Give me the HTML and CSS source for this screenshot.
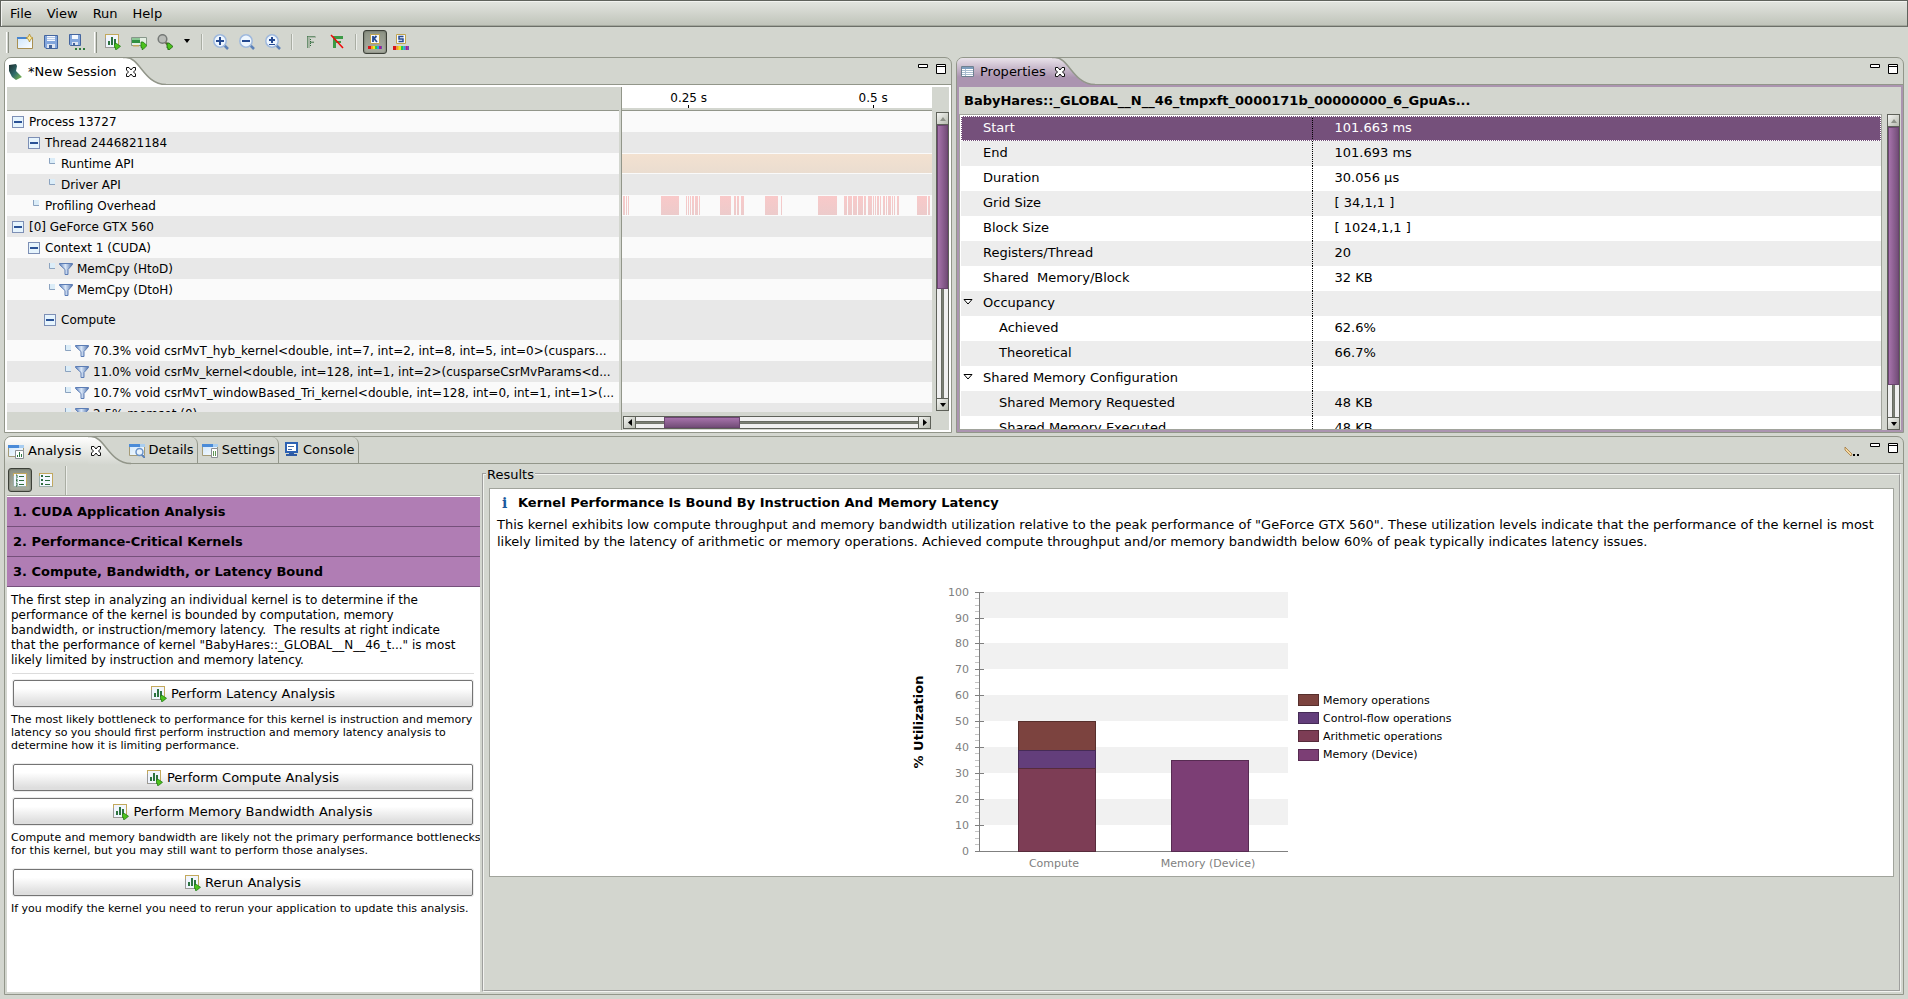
FILE: index.html
```html
<!DOCTYPE html>
<html lang="en">
<head>
<meta charset="utf-8">
<title>NVIDIA Visual Profiler</title>
<link rel="stylesheet" href="styles.css">
</head>
<body>
<svg class="defs" aria-hidden="true">
  <defs>
    <linearGradient id="gFunnel" x1="0" x2="1"><stop offset="0" stop-color="#5f82bd"/><stop offset=".45" stop-color="#dbe8f8"/><stop offset="1" stop-color="#4e70ab"/></linearGradient>
    <linearGradient id="gPurple" x1="0" x2="0" y1="0" y2="1"><stop offset="0" stop-color="#e9e3ea"/><stop offset=".7" stop-color="#ab94b0"/><stop offset="1" stop-color="#ab94b0"/></linearGradient>
    <linearGradient id="gFade" x1="0" x2="0" y1="0" y2="1"><stop offset="0" stop-color="#fff"/><stop offset="1" stop-color="#d3d6cf"/></linearGradient>
    <linearGradient id="gWin" x1="0" x2="1" y1="0" y2="1"><stop offset="0" stop-color="#cfe6fb"/><stop offset="1" stop-color="#fdfefe"/></linearGradient>
    <linearGradient id="gNv" x1="0" x2="1" y1="0" y2="1"><stop offset="0" stop-color="#1b2b2c"/><stop offset=".5" stop-color="#2f6a6a"/><stop offset="1" stop-color="#86c24a"/></linearGradient>
    <linearGradient id="gPink" x1="0" x2="0" y1="0" y2="1"><stop offset="0" stop-color="#f9c9c9"/><stop offset="1" stop-color="#eccbcb"/></linearGradient>
  </defs>
  <symbol id="minus" viewBox="0 0 12 12"><rect x=".5" y=".5" width="11" height="11" fill="#e6f4fd" stroke="#7d8fb5"/><path d="M2 5h8v2H2z" fill="#2a5296"/></symbol>
  <symbol id="leaf" viewBox="0 0 12 12"><path d="M6 0h5v5H6z" fill="#dcedf8"/><path d="M5.500 0v5.500H11" fill="none" stroke="#8ba3c0"/></symbol>
  <symbol id="funnel" viewBox="0 0 16 16"><path d="M1.500 2.500h13v1L10 8.500v5H7v-5l-5.500-5z" fill="url(#gFunnel)" stroke="#5c7db5"/></symbol>
  <symbol id="close" viewBox="0 0 12 12"><path d="M1.500 1.500H4l2 2.500 2-2.500h2.500V4L8.500 6l2 2v2.500H8L6 8l-2 2.500H1.500V8l2-2-2-2z" fill="#fff" stroke="#111"/></symbol>
  <symbol id="run" viewBox="0 0 16 16"><rect x=".5" y=".5" width="13" height="13" fill="#f1f5fd" stroke="#c3a95c"/><path d="M.5 4v9.500h9" fill="none" stroke="#999"/><path d="M3 7h2v4H3zM6 3h2v8H6zM9 5h2v6H9z" fill="#2c7340"/><path d="M9.500 9.500h2l4 2.800-4 3.200h-1v-2h-1z" fill="#4cc21c" stroke="#1f7a16" stroke-width=".8"/></symbol>
  <symbol id="lens" viewBox="0 0 16 16"><path d="M11 11l4 4" stroke="#5b81b8" stroke-width="2.500"/><circle cx="7" cy="7" r="6.200" fill="#eef6fe" stroke="#9fb9dd" stroke-width="1.500"/></symbol>
  <symbol id="view" viewBox="0 0 16 16"><path d="M.5 2.500h15v11H.5z" fill="url(#gWin)" stroke="#a59b77"/><path d="M0 2h16v3H0z" fill="#4a8bd8"/><path d="M11 2h5v3h-5z" fill="#a8cdf0"/></symbol>
  <symbol id="bars5" viewBox="0 0 14 4" preserveAspectRatio="none"><path d="M0 0h3v4H0z" fill="#d8141c"/><path d="M3 0h2v4H3z" fill="#f7a21c"/><path d="M5 0h2v4H5z" fill="#ece91b"/><path d="M7 0h2v4H7z" fill="#27c84d"/><path d="M9 0h2v4H9z" fill="#2aa3e0"/><path d="M11 0h2v4h-2z" fill="#a61b90"/><path d="M13 0h1v4h-1z" fill="#6c4fb0"/></symbol>
  <symbol id="min" viewBox="0 0 10 10"><path d="M.5.5h9v3h-9z" fill="#fff" stroke="#000"/></symbol>
  <symbol id="max" viewBox="0 0 10 10"><path d="M.5.5h9v9h-9zM1 2.500h8" fill="#fff" stroke="#000"/></symbol>
  <symbol id="list" viewBox="0 0 16 16"><rect x="1.500" y="1.500" width="13" height="13" fill="#f2f7ff" stroke="#c2a85e"/><path d="M1.500 4v10.500h13" fill="none" stroke="#9db0ad"/><path d="M7 4.500h5M7 8.500h5M7 12.500h5" stroke="#2c6b3d"/></symbol>
</svg>

<div class="app">
  <nav class="menubar">
    <button>File</button><button>View</button><button>Run</button><button>Help</button>
  </nav>

  <div class="toolbar">
    <span class="handle"></span>
    <button aria-label="New session"><svg width="16" height="16" viewBox="0 0 16 16"><path d="M.5 4.500h15v10H.5z" fill="url(#gWin)" stroke="#a98f51"/><path d="M0 3h10v2H0z" fill="#4784cf"/><path d="M12.500 0l1.200 2.800L16 4l-2.300 1.200L12.500 8l-1.200-2.800L9 4l2.300-1.200z" fill="#fbe99c" stroke="#b08a28" stroke-width=".8"/></svg></button>
    <button aria-label="Save"><svg width="16" height="16" viewBox="0 0 16 16"><path d="M1.500 1.500h13v13H3l-1.500-1.500z" fill="#83a6dc" stroke="#44659f"/><path d="M4 2h8v5H4z" fill="#f4f8fe"/><path d="M4 3.500h8M4 5.500h8" stroke="#b5c9e8"/><path d="M4 10h8v4H4z" fill="#dfe6f2"/><path d="M6 11h3v4H6z" fill="#42639b"/></svg></button>
    <button aria-label="Save all"><svg width="18" height="16" viewBox="0 0 18 16"><path d="M1.500.5h11v11h-10l-1-1z" fill="#83a6dc" stroke="#44659f"/><path d="M4 1h6v4H4z" fill="#f4f8fe"/><path d="M4 8h6v3H4z" fill="#dfe6f2"/><path d="M5 9h2v3H5z" fill="#42639b"/><path d="M7 14h2v2H7zM11 14h2v2h-2zM15 14h2v2h-2z" fill="#2f7a3b"/></svg></button>
    <span class="handle"></span>
    <button aria-label="Run analysis"><svg width="16" height="16"><use href="#run"/></svg></button>
    <button aria-label="Run application"><svg width="16" height="16" viewBox="0 0 16 16"><path d="M.5 3.500h15v8H.5z" fill="#e4efe3" stroke="#87978a"/><path d="M1 4h8v5H1z" fill="#2f9141"/><path d="M1 4h8v2H1z" fill="#8cc796"/><path d="M2 11h6v1.500H2z" fill="#c2a85e"/><path d="M10 8h2l4 3.500-4 4h-1v-2h-1z" fill="#4cc21c" stroke="#1f7a16" stroke-width=".8"/></svg></button>
    <button aria-label="Examine"><svg width="16" height="16" viewBox="0 0 16 16"><path d="M8 8l4 4" stroke="#74654a" stroke-width="2"/><circle cx="5.500" cy="5" r="4.300" fill="#b9bcb8" stroke="#767a77" stroke-width="1.500"/><path d="M10 9h2l4 3.500-4 3.500h-1v-2h-1z" fill="#4cc21c" stroke="#1a5e12" stroke-width=".8"/></svg></button>
    <button class="caret" aria-label="Examine options"><svg width="6" height="4" viewBox="0 0 6 4"><path d="M0 0h6L3 4z"/></svg></button>
    <span class="sep"></span>
    <button aria-label="Zoom in"><svg width="16" height="16" viewBox="0 0 16 16"><use href="#lens"/><path d="M3 6h8v2H3zM6 3h2v8H6z" fill="#254a91"/></svg></button>
    <button aria-label="Zoom out"><svg width="16" height="16" viewBox="0 0 16 16"><use href="#lens"/><path d="M3 6h8v2H3z" fill="#254a91"/></svg></button>
    <button aria-label="Zoom to fit"><svg width="16" height="16" viewBox="0 0 16 16"><use href="#lens"/><path d="M4 5h6v2H4zM6 3h2v6H6zM4 10h6v1H4z" fill="#254a91"/></svg></button>
    <span class="sep"></span>
    <button aria-label="Apply filter"><svg width="16" height="16" viewBox="0 0 16 16"><path d="M4 2h9v2H7v3h4v2H7v5H4z" fill="#a9b8a6"/><path d="M4.500 2.500h8M4.500 2.500v11.500M7.500 5v8M7.500 8.500h4" fill="none" stroke="#2f6b3c" stroke-dasharray="1 1"/></svg></button>
    <button aria-label="Clear filter"><svg width="16" height="16" viewBox="0 0 16 16"><path d="M4 2h10v3H7v2h5v2H7v5H4z" fill="#3c9a46"/><path d="M2 1l12 13" stroke="#f00808" stroke-width="1.500"/></svg></button>
    <span class="sep"></span>
    <button class="pressed" aria-label="Color by kernel"><svg width="16" height="16" viewBox="0 0 16 16"><path d="M3.500.5h9v9h-9z" fill="#f5f9ff" stroke="#c0a44f"/><path d="M6 2v6M6.500 5l3-3M7 4.500L10 8" stroke="#254a91" stroke-width="1.800" fill="none"/><use href="#bars5" x="1" y="12" width="14" height="3"/></svg></button>
    <button aria-label="Color by stream"><svg width="16" height="16" viewBox="0 0 16 16"><path d="M3.500.5h9v9h-9z" fill="#f5f9ff" stroke="#c0a44f"/><path d="M10.500 2.500H6V5h4v2.500H5.500" stroke="#254a91" stroke-width="1.500" fill="none"/><use href="#bars5" x="0" y="12" width="16" height="4"/></svg></button>
  </div>

  <main class="workbench">
    <section class="pane session">
      <div class="tabs">
        <div class="tab active white">
          <svg width="16" height="16" viewBox="0 0 16 16"><path d="M1 1l7-1 1 2-1 5 6 6-6 3-4-3L1 7z" fill="url(#gNv)"/></svg>
          <span>*New Session</span>
          <button class="x" aria-label="Close"><svg width="12" height="12"><use href="#close"/></svg></button>
        </div>
        <svg class="swoosh" width="46" height="28" viewBox="0 0 46 28"><path d="M0 0h3c14 0 18 26 38 26.500V28H0z" fill="#fff"/><path d="M0-.5h3c14 0 18 27 40 27" fill="none" stroke="#92968a" stroke-width="1.500"/></svg>
        <div class="winbtns"><button aria-label="Minimize"><svg width="10" height="10"><use href="#min"/></svg></button><button aria-label="Maximize"><svg width="10" height="10"><use href="#max"/></svg></button></div>
      </div>
      <div class="timeline">
        <div class="names">
          <div class="corner"></div>
          <ul class="tree">
            <li class="l0"><svg class="tw"><use href="#minus"/></svg>Process 13727</li>
            <li class="l1"><svg class="tw"><use href="#minus"/></svg>Thread 2446821184</li>
            <li class="l2"><svg class="tw"><use href="#leaf"/></svg>Runtime API</li>
            <li class="l2"><svg class="tw"><use href="#leaf"/></svg>Driver API</li>
            <li class="l1"><svg class="tw"><use href="#leaf"/></svg>Profiling Overhead</li>
            <li class="l0"><svg class="tw"><use href="#minus"/></svg>[0] GeForce GTX 560</li>
            <li class="l1"><svg class="tw"><use href="#minus"/></svg>Context 1 (CUDA)</li>
            <li class="l2"><svg class="tw"><use href="#leaf"/></svg><svg class="fn"><use href="#funnel"/></svg>MemCpy (HtoD)</li>
            <li class="l2"><svg class="tw"><use href="#leaf"/></svg><svg class="fn"><use href="#funnel"/></svg>MemCpy (DtoH)</li>
            <li class="l2 tall"><svg class="tw"><use href="#minus"/></svg>Compute</li>
            <li class="l3"><svg class="tw"><use href="#leaf"/></svg><svg class="fn"><use href="#funnel"/></svg>70.3% void csrMvT_hyb_kernel&lt;double, int=7, int=2, int=8, int=5, int=0&gt;(cuspars...</li>
            <li class="l3"><svg class="tw"><use href="#leaf"/></svg><svg class="fn"><use href="#funnel"/></svg>11.0% void csrMv_kernel&lt;double, int=128, int=1, int=2&gt;(cusparseCsrMvParams&lt;d...</li>
            <li class="l3"><svg class="tw"><use href="#leaf"/></svg><svg class="fn"><use href="#funnel"/></svg>10.7% void csrMvT_windowBased_Tri_kernel&lt;double, int=128, int=0, int=1, int=1&gt;(...</li>
            <li class="l3"><svg class="tw"><use href="#leaf"/></svg><svg class="fn"><use href="#funnel"/></svg>2.5% memset (0)</li>
          </ul>
          <div class="foot"></div>
        </div>
        <div class="tracks">
          <div class="ruler">
            <span class="mark first">0.25 s</span><span class="mark second">0.5 s</span>
          </div>
          <div class="rows">
            <div></div><div></div>
            <div><span class="api"></span></div>
            <div></div>
            <div><svg class="overhead" viewBox="0 0 310 19" preserveAspectRatio="none"><path fill="url(#gPink)" d="M1 0h2v19H1zM4 0h1v19H4zM6 0h1v19H6zM39 0h18v19H39zM64 0h1v19h-1zM66 0h1v19h-1zM68 0h1v19h-1zM70 0h2v19h-2zM73 0h3v19h-3zM77 0h1v19h-1zM98 0h11v19H98zM112 0h2v19h-2zM115 0h2v19h-2zM119 0h3v19h-3zM143 0h13v19h-13zM159 0h1v19h-1zM196 0h19v19h-19zM222 0h3v19h-3zM226 0h4v19h-4zM231 0h4v19h-4zM236 0h5v19h-5zM242 0h2v19h-2zM246 0h4v19h-4zM251 0h1v19h-1zM253 0h1v19h-1zM255 0h2v19h-2zM258 0h1v19h-1zM261 0h2v19h-2zM264 0h1v19h-1zM266 0h3v19h-3zM270 0h1v19h-1zM272 0h1v19h-1zM275 0h2v19h-2zM295 0h10v19h-10zM306 0h2v19h-2z"/></svg></div>
            <div></div><div></div><div></div><div></div>
            <div class="tall"></div>
            <div></div><div></div><div></div><div></div>
          </div>
          <div class="hbar">
            <button class="step" aria-label="Scroll left"><svg width="4" height="7" viewBox="0 0 4 7"><path d="M4 0v7L0 3.500z"/></svg></button>
            <div class="groove"><span class="thumb"></span></div>
            <button class="step" aria-label="Scroll right"><svg width="4" height="7" viewBox="0 0 4 7"><path d="M0 0v7l4-3.500z"/></svg></button>
          </div>
        </div>
        <div class="side">
          <div class="vbar">
            <button class="step off" aria-label="Scroll up"><svg width="6" height="4" viewBox="0 0 6 4"><path d="M0 4h6L3 0z"/></svg></button>
            <div class="groove"><span class="thumb tl"></span></div>
            <button class="step" aria-label="Scroll down"><svg width="6" height="4" viewBox="0 0 6 4"><path d="M0 0h6L3 4z"/></svg></button>
          </div>
        </div>
      </div>
    </section>

    <section class="pane props">
      <div class="tabs">
        <div class="tab active purple">
          <svg width="16" height="16" viewBox="0 0 16 16"><path d="M1.500 2.500h12v10h-12z" fill="#fff" stroke="#6e8090"/><path d="M2 3h11v2H2z" fill="#7d9dbd"/><path d="M2 6.500h11M2 8.500h11M2 10.500h11M5.500 5v7" stroke="#a9bdd0" fill="none"/></svg>
          <span>Properties</span>
          <button class="x" aria-label="Close"><svg width="12" height="12"><use href="#close"/></svg></button>
        </div>
        <svg class="swoosh" width="46" height="28" viewBox="0 0 46 28"><path d="M0 0h3c14 0 18 26 38 26.500V28H0z" fill="url(#gPurple)"/><path d="M0-.5h3c14 0 18 27 40 27" fill="none" stroke="#92968a" stroke-width="1.500"/></svg>
        <div class="winbtns"><button aria-label="Minimize"><svg width="10" height="10"><use href="#min"/></svg></button><button aria-label="Maximize"><svg width="10" height="10"><use href="#max"/></svg></button></div>
      </div>
      <div class="propbody">
        <h2>BabyHares::_GLOBAL__N__46_tmpxft_0000171b_00000000_6_GpuAs...</h2>
        <div class="propscroll">
          <div class="proptable">
            <table>
              <tbody>
                <tr class="sel"><td>Start</td><td>101.663 ms</td></tr>
                <tr><td>End</td><td>101.693 ms</td></tr>
                <tr><td>Duration</td><td>30.056 µs</td></tr>
                <tr><td>Grid Size</td><td>[ 34,1,1 ]</td></tr>
                <tr><td>Block Size</td><td>[ 1024,1,1 ]</td></tr>
                <tr><td>Registers/Thread</td><td>20</td></tr>
                <tr><td>Shared&nbsp; Memory/Block</td><td>32 KB</td></tr>
                <tr class="group"><td><svg width="10" height="6" viewBox="0 0 10 6"><path d="M1 .5h8L5 5z" fill="#fff" stroke="#000"/></svg>Occupancy</td><td></td></tr>
                <tr class="sub"><td>Achieved</td><td>62.6%</td></tr>
                <tr class="sub"><td>Theoretical</td><td>66.7%</td></tr>
                <tr class="group"><td><svg width="10" height="6" viewBox="0 0 10 6"><path d="M1 .5h8L5 5z" fill="#fff" stroke="#000"/></svg>Shared Memory Configuration</td><td></td></tr>
                <tr class="sub"><td>Shared Memory Requested</td><td>48 KB</td></tr>
                <tr class="sub"><td>Shared Memory Executed</td><td>48 KB</td></tr>
              </tbody>
            </table>
          </div>
          <div class="vbar">
            <button class="step off" aria-label="Scroll up"><svg width="6" height="4" viewBox="0 0 6 4"><path d="M0 4h6L3 0z"/></svg></button>
            <div class="groove"><span class="thumb pr"></span></div>
            <button class="step" aria-label="Scroll down"><svg width="6" height="4" viewBox="0 0 6 4"><path d="M0 0h6L3 4z"/></svg></button>
          </div>
        </div>
      </div>
    </section>

    <section class="pane analysis">
      <div class="tabs">
        <div class="tab active fade">
          <svg width="16" height="16" viewBox="0 0 16 16"><use href="#view"/><path d="M7.500 7.500h8v8h-8z" fill="#fff" stroke="#8a8f94"/><path d="M9 12h1v2H9zM11 9h1v5h-1zM13 11h1v3h-1z" fill="#2c7340"/></svg>
          <span>Analysis</span>
          <button class="x" aria-label="Close"><svg width="12" height="12"><use href="#close"/></svg></button>
        </div>
        <svg class="swoosh" width="46" height="28" viewBox="0 0 46 28"><path d="M0 0h3c14 0 18 26 38 26.500V28H0z" fill="url(#gFade)"/><path d="M0-.5h3c14 0 18 27 40 27" fill="none" stroke="#92968a" stroke-width="1.500"/></svg>
        <button class="tab details"><svg width="16" height="16" viewBox="0 0 16 16"><use href="#view"/><circle cx="10.500" cy="10" r="3.500" fill="#e9f3fd" stroke="#6a93c9" stroke-width="1.500"/><path d="M13 13l3 3" stroke="#5b81b8" stroke-width="2"/></svg><span>Details</span></button>
        <button class="tab"><svg width="16" height="16" viewBox="0 0 16 16"><use href="#view"/><path d="M9.500 6.500h6v9h-6z" fill="#fff" stroke="#8a8f94"/><path d="M11.500 9v5M13.500 9v5" stroke="#5f9458"/></svg><span>Settings</span></button>
        <button class="tab"><svg width="16" height="16" viewBox="0 0 16 16"><path d="M3 1h11v9H3z" fill="#fff" stroke="#2d62b3" stroke-width="2"/><path d="M5 4.500h6M5 7.500h4" stroke="#3f67a5"/><path d="M6 11h5v1h3v2H3v-2h3z" fill="#2d5aa4"/></svg><span>Console</span></button>
        <div class="winbtns"><svg class="pencil" width="16" height="12" viewBox="0 0 16 12"><path d="M1 1l7 7-1 2-6-6z" fill="#f5d9a0" stroke="#9a6c2f" stroke-width=".7"/><path d="M9 8h2v2H9zM13 8h2v2h-2z"/></svg><button aria-label="Minimize"><svg width="10" height="10"><use href="#min"/></svg></button><button aria-label="Maximize"><svg width="10" height="10"><use href="#max"/></svg></button></div>
      </div>
      <div class="split">
        <aside class="guide">
          <div class="guidebar">
            <button class="pressed" aria-label="Guided analysis"><svg width="16" height="16" viewBox="0 0 16 16"><use href="#list"/><path d="M4 3h1v3M4 7h1v1l-1 1h2M4 11h1v3H4" stroke="#2c6b3d" fill="none"/></svg></button>
            <button aria-label="Unguided analysis"><svg width="16" height="16" viewBox="0 0 16 16"><use href="#list"/><path d="M3 3h2v2H3zM3 7h2v2H3zM3 11h2v2H3z" fill="#2c6b3d"/></svg></button>
            <span class="sep"></span>
          </div>
          <button class="stage">1. CUDA Application Analysis</button>
          <button class="stage">2. Performance-Critical Kernels</button>
          <button class="stage">3. Compute, Bandwidth, or Latency Bound</button>
          <div class="steps">
            <p class="intro">The first step in analyzing an individual kernel is to determine if the performance of the kernel is bounded by computation, memory bandwidth, or instruction/memory latency.&nbsp; The results at right indicate that the performance of kernel "BabyHares::_GLOBAL__N__46_t..." is most likely limited by instruction and memory latency.</p>
            <hr>
            <button class="act"><svg width="16" height="16"><use href="#run"/></svg>Perform Latency Analysis</button>
            <p>The most likely bottleneck to performance for this kernel is instruction and memory<br>latency so you should first perform instruction and memory latency analysis to<br>determine how it is limiting performance.</p>
            <button class="act"><svg width="16" height="16"><use href="#run"/></svg>Perform Compute Analysis</button>
            <button class="act"><svg width="16" height="16"><use href="#run"/></svg>Perform Memory Bandwidth Analysis</button>
            <p>Compute and memory bandwidth are likely not the primary performance bottlenecks<br>for this kernel, but you may still want to perform those analyses.</p>
            <button class="act"><svg width="16" height="16"><use href="#run"/></svg>Rerun Analysis</button>
            <p>If you modify the kernel you need to rerun your application to update this analysis.</p>
          </div>
        </aside>
        <fieldset class="results">
          <legend>Results</legend>
          <div class="sheet">
            <h3><span class="info">i</span>Kernel Performance Is Bound By Instruction And Memory Latency</h3>
            <p>This kernel exhibits low compute throughput and memory bandwidth utilization relative to the peak performance of "GeForce GTX 560". These utilization levels indicate that the performance of the kernel is most likely limited by the latency of arithmetic or memory operations. Achieved compute throughput and/or memory bandwidth below 60% of peak typically indicates latency issues.</p>
            <svg class="chart" width="584" height="295" viewBox="0 0 584 295" role="img" aria-label="Utilization chart">
              <g shape-rendering="crispEdges">
                <path fill="#f1f1f1" d="M80 12h308v26H80zM80 63h308v26H80zM80 115h308v26H80zM80 167h308v26H80zM80 219h308v26H80z"/>
                <path stroke="#c4c4c4" d="M75 18.500h4M75 25.500h4M75 31.500h4M75 44.500h4M75 50.500h4M75 56.500h4M75 69.500h4M75 76.500h4M75 82.500h4M75 95.500h4M75 102.500h4M75 108.500h4M75 121.500h4M75 128.500h4M75 134.500h4M75 147.500h4M75 154.500h4M75 160.500h4M75 173.500h4M75 180.500h4M75 186.500h4M75 199.500h4M75 206.500h4M75 212.500h4M75 225.500h4M75 232.500h4M75 238.500h4M75 251.500h4M75 258.500h4M75 264.500h4"/>
                <path stroke="#808080" fill="none" d="M79.500 12v260M75 12.500h9M75 38.500h9M75 63.500h9M75 89.500h9M75 115.500h9M75 141.500h9M75 167.500h9M75 193.500h9M75 219.500h9M75 245.500h9M75 271.500h313"/>
                <path fill="#7c433f" stroke="#572f2c" d="M118.500 141.500h77v29h-77z"/>
                <path fill="#633e7b" stroke="#452b56" d="M118.500 170.500h77v18h-77z"/>
                <path fill="#7d3d55" stroke="#572b3b" d="M118.500 188.500h77v83h-77z"/>
                <path fill="#7c3e75" stroke="#572b52" d="M271.500 180.500h77v91h-77z"/>
                <path fill="#7c433f" stroke="#572f2c" d="M398.500 114.500h20v11h-20z"/>
                <path fill="#633e7b" stroke="#452b56" d="M398.500 132.500h20v11h-20z"/>
                <path fill="#7d3d55" stroke="#572b3b" d="M398.500 150.500h20v11h-20z"/>
                <path fill="#7c3e75" stroke="#572b52" d="M398.500 169.500h20v11h-20z"/>
              </g>
              <g class="scale">
                <text x="69" y="16">100</text><text x="69" y="42">90</text><text x="69" y="67">80</text><text x="69" y="93">70</text><text x="69" y="119">60</text><text x="69" y="145">50</text><text x="69" y="171">40</text><text x="69" y="197">30</text><text x="69" y="223">20</text><text x="69" y="249">10</text><text x="69" y="275">0</text>
              </g>
              <g class="cats"><text x="154" y="287">Compute</text><text x="308" y="287">Memory (Device)</text></g>
              <g class="legend"><text x="423" y="124">Memory operations</text><text x="423" y="142">Control-flow operations</text><text x="423" y="160">Arithmetic operations</text><text x="423" y="178">Memory (Device)</text></g>
              <text class="ytitle" transform="translate(23 142) rotate(-90)">% Utilization</text>
            </svg>
          </div>
        </fieldset>
      </div>
    </section>
  </main>
</div>
</body>
</html>
```

FILE: styles.css
```css
* { box-sizing: border-box; }

body {
  margin: 0;
  background: #d3d6cf;
  color: #000;
  font: 13px/16px "DejaVu Sans", Verdana, sans-serif;
}

button {
  margin: 0;
  padding: 0;
  border: 0;
  background: none;
  font: inherit;
  color: inherit;
}

svg { display: block; flex: none; }
h2, h3, p, ul { margin: 0; padding: 0; }

.defs { position: absolute; width: 0; height: 0; }

.app {
  display: flex;
  flex-direction: column;
  height: 100vh;
  overflow: hidden;
}

/* menu and toolbar */
.menubar {
  display: flex;
  gap: 15px;
  height: 27px;
  flex: none;
  padding-left: 9px;
  border: 1px solid #5f625c;
  border-bottom-color: #6c6f68;
  box-shadow: inset 1px 1px #f2f3f0, inset 0 -1px #a3a79d;
  background: linear-gradient(#e3e5e0, #bfc3b9);
}

.toolbar {
  display: flex;
  align-items: center;
  height: 30px;
  flex: none;
  padding-left: 6px;
}

.toolbar button {
  display: flex;
  align-items: center;
  justify-content: center;
  width: 26px;
  height: 24px;
}

.toolbar .caret { width: 18px; padding-bottom: 3px; }

.handle {
  width: 3px;
  height: 21px;
  margin-right: 3px;
  border-left: 1px solid #fff;
  border-right: 1px solid #8b8f85;
}

button + .handle { margin-left: 4px; }

.sep {
  width: 2px;
  height: 16px;
  margin: 0 5px;
  border-left: 1px solid #a9ada3;
  border-right: 1px solid #eceeea;
}

.toolbar .pressed,
.guidebar .pressed {
  width: 24px;
  margin: 0 1px;
  border: 1px solid #3c4038;
  border-radius: 3px;
  background: linear-gradient(#8d9385, #a9ada1);
  box-shadow: inset 0 0 2px #555a50;
}

/* panes */
.workbench {
  flex: 1;
  min-height: 0;
  display: grid;
  grid-template-columns: 1fr 1fr;
  grid-template-rows: 376fr 559fr;
  gap: 3px 4px;
  padding: 0 4px 4px;
}

.pane {
  display: flex;
  flex-direction: column;
  min-width: 0;
  min-height: 0;
  border: 1px solid #92968a;
  border-radius: 7px 7px 0 0;
  overflow: hidden;
}

.analysis { grid-column: 1 / 3; }

.tabs {
  display: flex;
  height: 27px;
  flex: none;
  border-bottom: 1px solid #92968a;
}

.tab {
  display: flex;
  align-items: center;
  gap: 4px;
  height: 26px;
  padding: 0 3px 0 4px;
  border-right: 1px solid #92968a;
  border-top-right-radius: 7px;
}

.tab.active {
  position: relative;
  z-index: 1;
  height: 27px;
  padding: 0 0 0 3px;
  border: 0;
  border-radius: 0;
}

.tab.white { background: linear-gradient(90deg, #fff calc(100% - 14px), transparent 0); }
.tab.purple {
  background: linear-gradient(#e9e3ea, #ab94b0 70%);
  background-size: calc(100% - 14px) 100%;
  background-repeat: no-repeat;
}
.tab.fade {
  background: linear-gradient(#fff, #d3d6cf);
  background-size: calc(100% - 14px) 100%;
  background-repeat: no-repeat;
}

.tab .x { margin-left: 4px; }
.swoosh { margin-left: -14px; overflow: visible; }
.details { margin-left: -9px; }

.winbtns {
  display: flex;
  gap: 8px;
  margin-left: auto;
  padding: 6px 5px 0 0;
}

.winbtns button { height: 10px; }
.pencil { margin: 3px 2px 0 0; }

/* timeline */
.timeline {
  flex: 1;
  min-height: 0;
  display: flex;
  padding: 2px;
  background: #fff;
}

.names {
  flex: 612 1 0;
  min-width: 0;
  display: flex;
  flex-direction: column;
}

.corner {
  height: 24px;
  flex: none;
  background: #d3d6cf;
  border-bottom: 1px solid #92968a;
}

.foot { height: 18px; flex: none; background: #d3d6cf; }

.tree {
  flex: 1;
  min-height: 0;
  overflow: hidden;
  list-style: none;
  font-size: 12px;
}

.tree li {
  display: flex;
  align-items: center;
  height: 21px;
  white-space: nowrap;
  overflow: hidden;
  background: #fafafa;
}

.tree li:nth-child(even),
.rows > div:nth-child(even) { background: #e8e8e8; }
.tree li.tall, .rows > .tall { height: 40px; }

.l0 { padding-left: 5px; }
.l1 { padding-left: 21px; }
.l2 { padding-left: 37px; }
.l3 { padding-left: 53px; }

.tw { width: 12px; height: 12px; margin-right: 5px; }
.fn { width: 16px; height: 16px; margin: 0 3px 0 -3px; }

.tracks {
  flex: 310 1 0;
  min-width: 0;
  display: flex;
  flex-direction: column;
  padding-left: 3px;
  background: linear-gradient(90deg, #d3d6cf 2px, #92968a 2px, #92968a 3px, #d3d6cf 3px);
}

.ruler {
  display: flex;
  height: 24px;
  flex: none;
  border-bottom: 1px solid #92968a;
  background: linear-gradient(#fff 21px, #d3d6cf 21px);
  font-size: 12px;
}

.mark {
  height: 21px;
  padding-top: 3px;
  text-align: center;
  background: linear-gradient(#000, #000) center bottom / 1px 3px no-repeat;
}

.mark.first { width: 43%; }
.mark.second { width: 76%; margin-right: -19%; }

.rows { flex: 1; min-height: 0; overflow: hidden; }

.rows > div {
  height: 21px;
  padding: 1px 0;
  background: #fafafa;
}

.api { display: block; height: 19px; background: linear-gradient(#f3e1d0, #eaddd0); }
.overhead { width: 100%; height: 19px; shape-rendering: crispEdges; }

.side {
  flex: none;
  display: flex;
  width: 17px;
  padding: 25px 0 19px 4px;
  background: #d3d6cf;
}

/* scrollbars */
.vbar, .hbar {
  display: flex;
  flex: none;
  border: 1px solid #5e6159;
}

.vbar { flex-direction: column; width: 13px; }
.hbar { height: 13px; margin: 4px 1px 1px; }

.step {
  display: flex;
  align-items: center;
  justify-content: center;
  width: 11px;
  height: 11px;
  flex: none;
  background: linear-gradient(135deg, #f4f5f2, #b5b9ae);
}

.off { fill: #8d9188; }
.groove { flex: 1; min-width: 0; min-height: 0; display: flex; }

.vbar .groove {
  flex-direction: column;
  border: 1px solid #5e6159;
  border-width: 1px 0;
  background: linear-gradient(90deg, #f0f0f0 4px, #5e6159 4px, #858a7e 6px, #5e6159 7px, #f0f0f0 7px);
}

.hbar .groove {
  border: 1px solid #5e6159;
  border-width: 0 1px;
  background: linear-gradient(#f0f0f0 4px, #5e6159 4px, #858a7e 6px, #5e6159 7px, #f0f0f0 7px);
}

.thumb { display: block; border: 1px solid #6b4570; }
.vbar .thumb { background: linear-gradient(90deg, #a673ab, #744e79); }
.hbar .thumb { width: 27%; margin-left: 10%; background: linear-gradient(#a673ab, #744e79); }
.thumb.tl { height: 60%; }
.thumb.pr { height: 89%; }

/* properties */
.propbody {
  flex: 1;
  min-height: 0;
  display: flex;
  flex-direction: column;
  padding: 0 2px 2px;
  border-top: 2px solid #ab94b0;
  background: linear-gradient(#d3d6cf, #d3d6cf) content-box, #ab94b0;
}

.propbody h2 {
  padding: 6px 5px 5px;
  font-size: 13px;
  line-height: 16px;
  white-space: nowrap;
  overflow: hidden;
}

.propscroll {
  flex: 1;
  min-height: 0;
  display: flex;
  gap: 5px;
  padding-right: 1px;
}

.proptable {
  flex: 1;
  min-width: 0;
  overflow: hidden;
  border: 1px solid #a1a49c;
  padding: 1px 0 0 1px;
  background: #fff;
}

.proptable table {
  width: 100%;
  border-collapse: collapse;
  table-layout: fixed;
}

.proptable td { height: 25px; padding: 0 0 1px 22px; }

.proptable td:first-child {
  width: 351px;
  border-right: 1px dotted #000;
}

.proptable tr:nth-child(even) { background: #ededed; }
.proptable .sel { background: #75507b; color: #fff; outline: 1px dotted #fff; outline-offset: -1px; }
.proptable .sub td:first-child { padding-left: 38px; }
.proptable .group td:first-child { padding-left: 2px; }
.group svg { display: inline-block; margin: 0 10px 2px 0; }

/* analysis */
.split {
  flex: 1;
  min-height: 0;
  display: flex;
  gap: 2px;
  padding: 0 2px 2px;
}

.guide {
  flex: 0 0 473px;
  min-width: 0;
  display: flex;
  flex-direction: column;
}

.guidebar {
  display: flex;
  align-items: center;
  height: 33px;
  flex: none;
  border-bottom: 1px solid #fff;
  box-shadow: inset 0 -1px #a9ada3;
}

.guidebar button {
  display: flex;
  align-items: center;
  justify-content: center;
  width: 26px;
  height: 24px;
}

.guidebar .sep { height: 29px; margin-left: 6px; }

.stage {
  height: 30px;
  flex: none;
  padding: 1px 0 0 6px;
  border-bottom: 1px solid #75507b;
  background: #b07db4;
  font-weight: bold;
  text-align: left;
}

.steps {
  flex: 1;
  min-height: 0;
  padding: 6px 0 0 4px;
  background: #fff;
  overflow: hidden;
}

.steps p {
  padding: 6px 0 12px;
  font-size: 11px;
  line-height: 13px;
  white-space: nowrap;
}

.steps .intro {
  padding: 0 18px 5px 0;
  font-size: 12px;
  line-height: 15px;
  white-space: normal;
}

hr {
  margin: 0 6px 6px 1px;
  border: 0;
  border-top: 1px solid #dcdcdc;
}

.act {
  display: flex;
  align-items: center;
  justify-content: center;
  gap: 4px;
  width: calc(100% - 9px);
  height: 27px;
  margin: 0 7px 0 2px;
  border: 1px solid #747474;
  border-radius: 2px;
  background: linear-gradient(#fff 30%, #dedede 90%);
  box-shadow: 0 0 0 1px #ececec;
}

.act + .act { margin-top: 7px; }

.results {
  flex: 1;
  min-width: 0;
  margin: 0;
  padding: 5px 5px 0;
  border: 2px groove #f2f3f0;
}

.results legend { padding: 3px 1px 0; margin-left: -3px; }

.sheet {
  padding: 4px 7px 1px;
  border: 1px solid #a1a49c;
  background: #fff;
}

.sheet h3 { display: flex; font-size: 13px; line-height: 20px; }

.info {
  width: 21px;
  padding-left: 5px;
  color: #1c5a9e;
  font: bold 14px/20px "DejaVu Serif", serif;
}

.sheet p { padding-top: 3px; line-height: 17px; }
.chart { margin: 30px auto 0; font-size: 11px; }
.scale { fill: #808080; text-anchor: end; }
.cats { fill: #808080; text-anchor: middle; }
.ytitle { font-size: 13px; font-weight: bold; text-anchor: middle; }
```
